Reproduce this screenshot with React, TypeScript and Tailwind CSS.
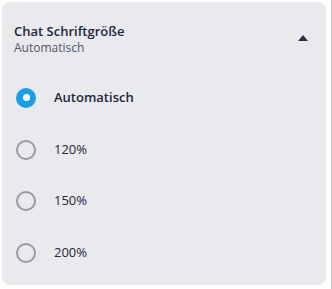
import React, { useState } from 'react';

const options = ['Automatisch', '120%', '150%', '200%'];

const Radio: React.FC<{ checked: boolean }> = ({ checked }) =>
  checked ? (
    <span className="flex h-[20px] w-[20px] items-center justify-center rounded-full bg-[#1b9ee3]">
      <span className="h-[7px] w-[7px] rounded-full bg-white" />
    </span>
  ) : (
    <span className="h-[20px] w-[20px] rounded-full border-2 border-[#9a9a9a]" />
  );

const App: React.FC = () => {
  const [value, setValue] = useState('Automatisch');

  return (
    <div className="h-[289px] w-[332px] border-r border-[#c8c8c8] bg-white p-[2px] pr-[5px] font-['Open_Sans','Noto_Sans',sans-serif] text-[#24243a]">
      <div className="h-[283px] rounded-[8px] bg-[#e9eaed]">
        {/* Header */}
        <div className="flex items-center justify-between pl-[12px] pr-[18px] pt-[21px]">
          <div>
            <div className="text-[13px] leading-[17px] font-semibold">Chat Schriftgröße</div>
            <div className="text-[12px] leading-[16px] text-[#555566]">Automatisch</div>
          </div>
          <svg width="10" height="6" viewBox="0 0 10 6" className="mt-[-4px]">
            <path d="M5 0 L10 6 L0 6 Z" fill="#2e2e45" />
          </svg>
        </div>

        {/* Options */}
        <div className="flex flex-col pt-[16px]">
          {options.map(opt => (
            <button
              key={opt}
              onClick={() => setValue(opt)}
              className="flex h-[51.7px] items-center gap-[18px] pl-[14px] text-left"
            >
              <Radio checked={value === opt} />
              <span className={`text-[13px] ${value === opt ? 'font-semibold' : ''}`}>{opt}</span>
            </button>
          ))}
        </div>
      </div>
    </div>
  );
};

export default App;
